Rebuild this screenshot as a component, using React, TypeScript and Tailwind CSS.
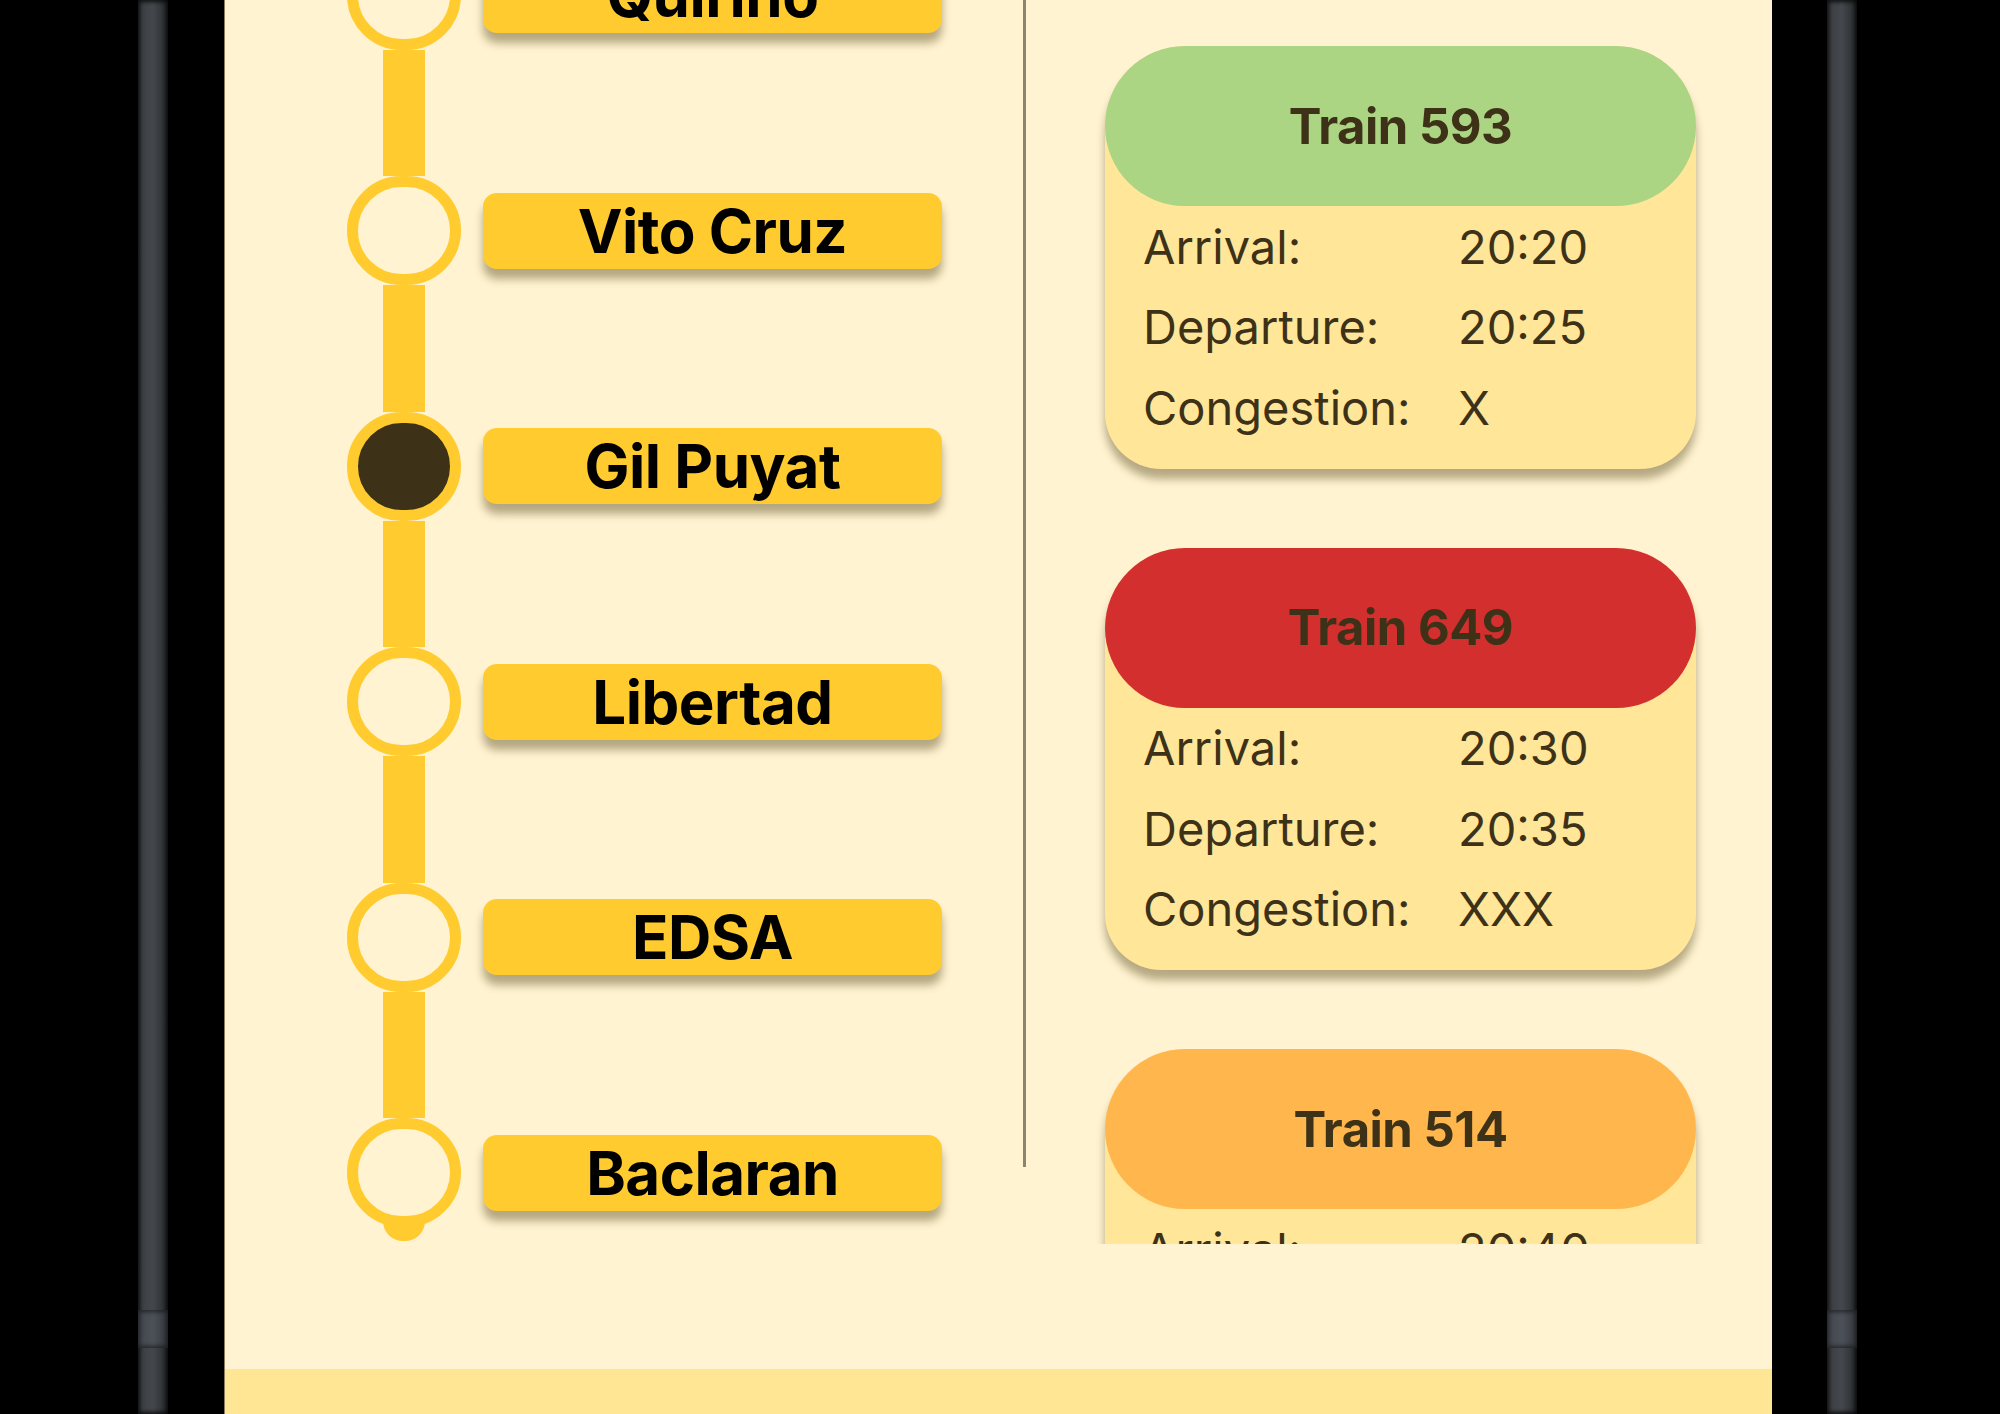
import React from "react";

const stations = [
  { name: "Quirino", active: false },
  { name: "Vito Cruz", active: false },
  { name: "Gil Puyat", active: true },
  { name: "Libertad", active: false },
  { name: "EDSA", active: false },
  { name: "Baclaran", active: false },
];

const trains = [
  { name: "Train 593", head: "bg-[#ABD483]", arrival: "20:20", departure: "20:25", congestion: "X" },
  { name: "Train 649", head: "bg-[#D32F2F]", arrival: "20:30", departure: "20:35", congestion: "XXX" },
  { name: "Train 514", head: "bg-[#FFB74D]", arrival: "20:40", departure: "20:45", congestion: "XX" },
];

function Stripe() {
  return (
    <div className="w-[30px] h-full flex flex-col bg-gradient-to-r from-[#3a3e42] via-[#44484d] to-[#25282a] shadow-[0_0_4px_2px_rgba(0,0,0,0.8)_inset]">
      <div className="h-[1310px]" />
      <div className="h-[38px] bg-gradient-to-r from-[#42464c] via-[#4c5058] to-[#33373c] shadow-[0_0_4px_2px_rgba(0,0,0,0.5)_inset]" />
      <div className="flex-1" />
    </div>
  );
}

function StationRow({ name, active, last }: { name: string; active: boolean; last: boolean }) {
  return (
    <div className="flex flex-col">
      <div className="w-[114px] h-[63.3px] flex justify-center">
        <div className="w-[42px] h-full bg-[#FFCB2E]" />
      </div>
      <div className="flex items-center">
        <div
          className={`w-[114px] h-[109px] rounded-full border-[11px] border-[#FFCB2E] shrink-0 ${
            active ? "bg-[#3D3218]" : "bg-[#FFF3D1]"
          }`}
        />
        <div className="ml-[22px] w-[459px] h-[76px] rounded-[14px] bg-[#FFCB2E] shadow-[0_10px_9px_rgba(90,75,30,0.45)] flex items-center justify-center">
          <span className="font-['Inter'] font-bold text-[60px] leading-none text-black tracking-[-0.5px]">{name}</span>
        </div>
      </div>
      <div className="w-[114px] flex justify-center">
        {last ? (
          <div className="-mt-[6px] h-[20px] w-[42px] bg-[#FFCB2E] rounded-b-full" />
        ) : (
          <div className="h-[63.3px] w-[42px] bg-[#FFCB2E]" />
        )}
      </div>
    </div>
  );
}

function TrainCard({ t }: { t: (typeof trains)[number] }) {
  return (
    <div className="w-[591px] shrink-0 rounded-t-[81px] rounded-b-[56px] bg-[#FFE699] shadow-[0_10px_8px_rgba(90,78,35,0.45)] font-['Inter'] text-[#3D3218]">
      <div className={`h-[160px] rounded-full ${t.head} flex items-center justify-center`}>
        <span className="font-bold text-[49px] leading-none tracking-[-0.5px]">{t.name}</span>
      </div>
      <div className="pl-[38px] pb-[21px] text-[47px] leading-none">
        {[
          ["Arrival:", t.arrival],
          ["Departure:", t.departure],
          ["Congestion:", t.congestion],
        ].map(([k, v]) => (
          <div key={k} className="h-[80.5px] flex items-center">
            <span className="w-[315px]">{k}</span>
            <span>{v}</span>
          </div>
        ))}
      </div>
    </div>
  );
}

export default function App() {
  return (
    <div className="w-[2000px] h-[1414px] bg-black flex overflow-hidden">
      <div className="w-[224px] h-full pl-[138px] shrink-0">
        <Stripe />
      </div>
      <div className="w-[1548px] h-full shrink-0 bg-[#FFF3D1] flex flex-col border-l border-[#8a7c56]">
        <div className="h-[1369px] flex">
          <div className="w-[798px] h-[1244px] overflow-hidden pl-[122px]">
            <div className="-mt-[122.8px] flex flex-col">
              {stations.map((s, i) => (
                <StationRow key={s.name} name={s.name} active={s.active} last={i === stations.length - 1} />
              ))}
            </div>
          </div>
          <div className="w-[3px] h-[1167px] bg-[#8C8470] shrink-0" />
          <div className="w-[700px] h-[1244px] overflow-hidden pl-[79px] pt-[46px] flex flex-col gap-[79px]">
            {trains.map((t) => (
              <TrainCard key={t.name} t={t} />
            ))}
          </div>
        </div>
        <div className="flex-1 bg-[#FFE695]" />
      </div>
      <div className="w-[228px] h-full pl-[55px] shrink-0">
        <Stripe />
      </div>
    </div>
  );
}
